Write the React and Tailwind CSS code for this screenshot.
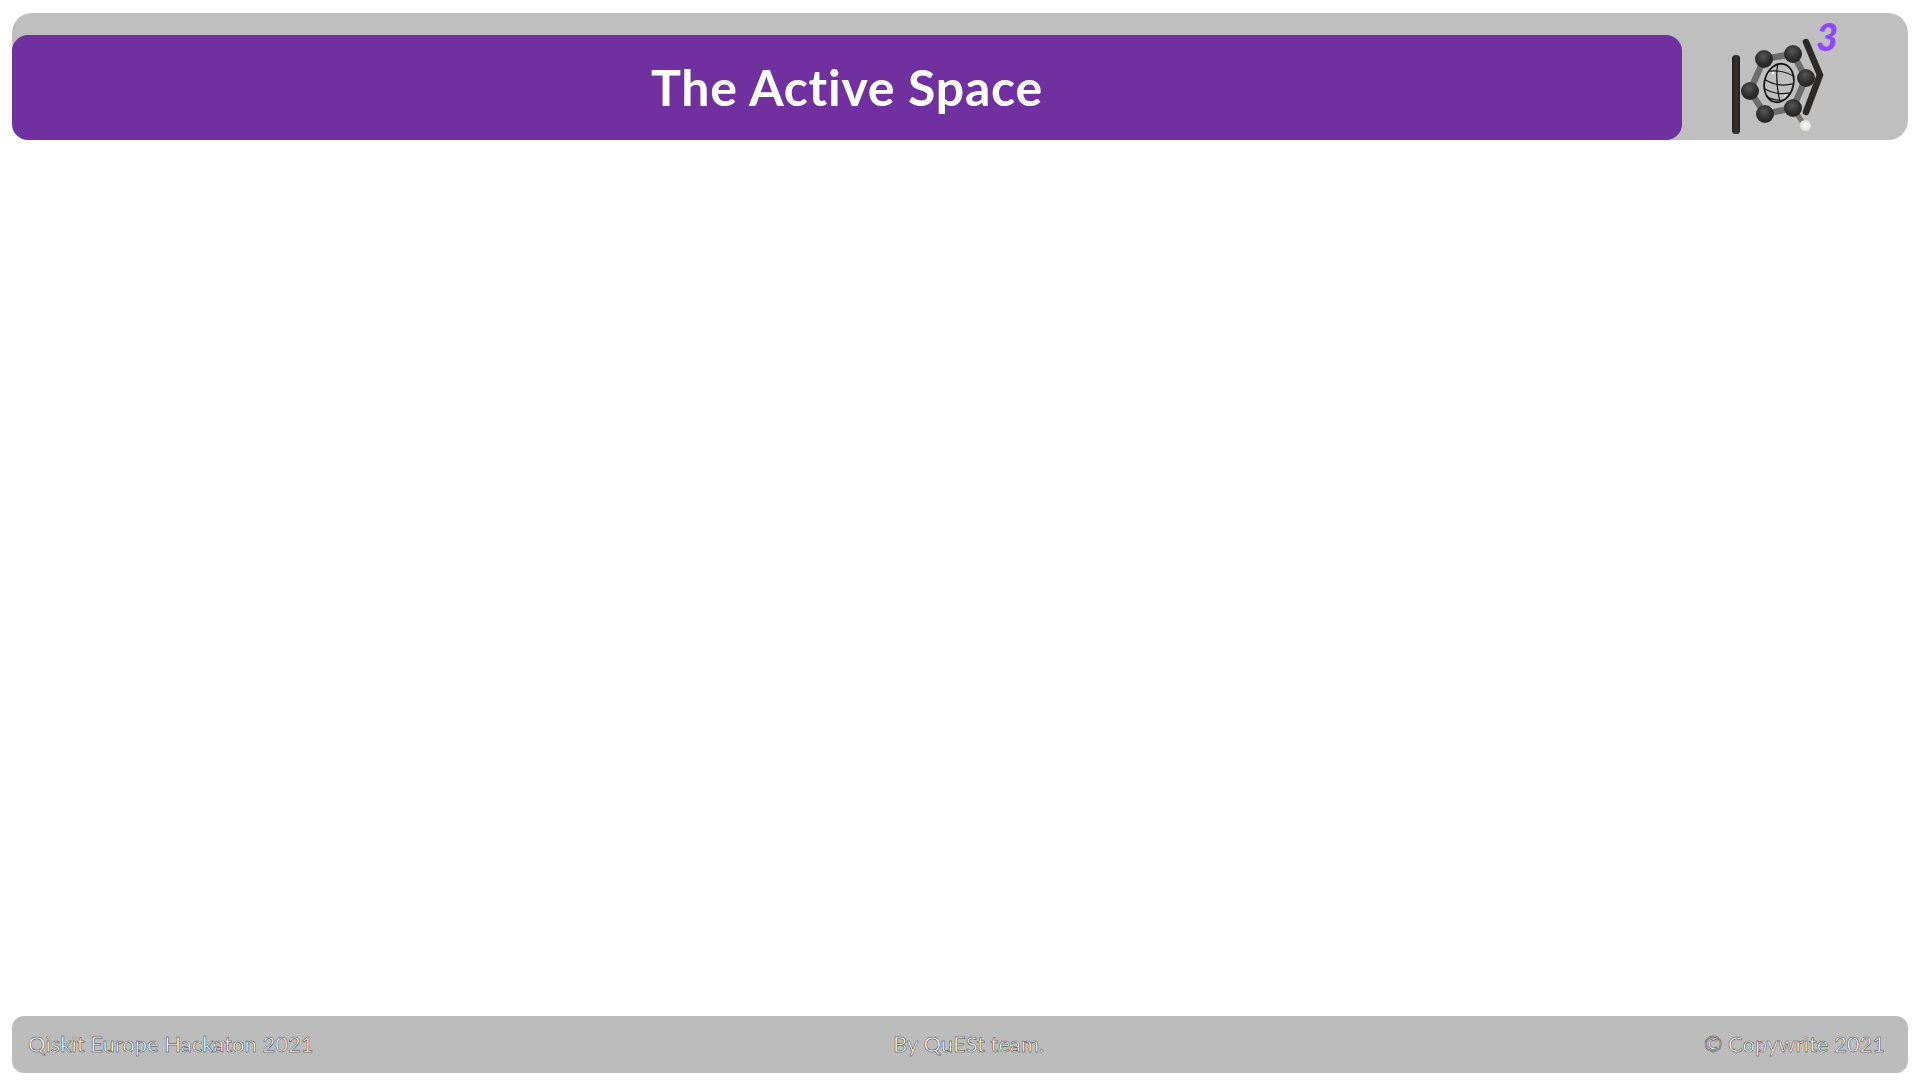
import React from 'react';

const ATOMS = [[44, 44], [73, 39], [86, 63], [73, 93], [45, 99], [30, 76]];

const QuestLogo = () => (
  <svg width="125" height="127" viewBox="0 -2 125 127">
    <defs>
      <radialGradient id="atom" cx="45%" cy="35%" r="70%">
        <stop offset="0%" stopColor="#565656" />
        <stop offset="60%" stopColor="#2e2e2e" />
        <stop offset="100%" stopColor="#232323" />
      </radialGradient>
      <radialGradient id="hydrogen" cx="55%" cy="45%" r="60%">
        <stop offset="0%" stopColor="#ffffff" />
        <stop offset="70%" stopColor="#e4e2dc" />
        <stop offset="100%" stopColor="#a5a39d" />
      </radialGradient>
      <linearGradient id="bar" x1="0" x2="1" y1="0" y2="0">
        <stop offset="0%" stopColor="#1f1e1c" />
        <stop offset="55%" stopColor="#353432" />
        <stop offset="100%" stopColor="#1f1e1c" />
      </linearGradient>
    </defs>

    {/* ket bars */}
    <rect x="12" y="40" width="8" height="79" rx="3.5" fill="url(#bar)" />
    <path d="M86 27 L100 60 L86 97" fill="none" stroke="#2b2a28" strokeWidth="6.5" strokeLinecap="round" strokeLinejoin="miter" />

    {/* bonds */}
    <line x1="73" y1="93" x2="85" y2="111" stroke="#767572" strokeWidth="5" />
    <polygon points="44,44 73,39 86,63 73,93 45,99 30,76" fill="none" stroke="#6d6d6b" strokeWidth="6.5" strokeLinejoin="round" />

    {/* globe */}
    <g transform="rotate(14 59 68)" fill="none" stroke="#161616" strokeWidth="1.2">
      <ellipse cx="59" cy="68" rx="14.5" ry="19.5" strokeWidth="1.8" />
      <path d="M46 59 Q59 54 72 58" />
      <path d="M44.5 68 Q59 73 73.5 65" />
      <path d="M46 77 Q59 81 72 75" />
      <path d="M50 84 Q60 87 68 83" />
      <path d="M53 50 Q55 68 65 87" />
    </g>
    <circle cx="53" cy="58" r="1.2" fill="#ffffff" />
    <circle cx="65" cy="81" r="1.2" fill="#ffffff" />

    {/* atoms */}
    {ATOMS.map(([cx, cy]) => (
      <circle key={`${cx}-${cy}`} cx={cx} cy={cy} r="9" fill="url(#atom)" />
    ))}
    <circle cx="85" cy="111" r="6" fill="url(#hydrogen)" />

    <text x="96" y="36" fill="#9146ff" fontSize="38" fontWeight="900" fontStyle="italic" fontFamily="Lato, sans-serif">3</text>
  </svg>
);

const footerText = 'text-[22px] leading-none -translate-y-px [font-variant-ligatures:none] text-white [-webkit-text-stroke:0.5px_#333333]';

export default function App() {
  return (
    <div className="w-[1920px] h-[1080px] bg-white flex flex-col justify-between px-3 pt-[13px] pb-[7px] font-['Lato',sans-serif]">
      {/* Header */}
      <div className="flex h-[127px] bg-[#bfbfbf] rounded-[20px]">
        <div className="flex-1 mt-[22px] bg-[#7030a0] rounded-[16px] flex items-center justify-center">
          <h1 className="text-[50px] leading-none font-bold text-white tracking-[0.75px] [font-variant-ligatures:none] -translate-y-px">The Active Space</h1>
        </div>
        <div className="w-[226px] pl-[38px]">
          <QuestLogo />
        </div>
      </div>

      {/* Footer */}
      <div className="h-[57px] bg-[#bcbcbc] rounded-[12px] pl-4 pr-[23px] grid grid-cols-[865px_1fr_auto] items-center">
        <span className={footerText}>Qiskit Europe Hackaton 2021</span>
        <span className={footerText}>By QuESt team.</span>
        <span className={footerText}>© Copywrite 2021</span>
      </div>
    </div>
  );
}
